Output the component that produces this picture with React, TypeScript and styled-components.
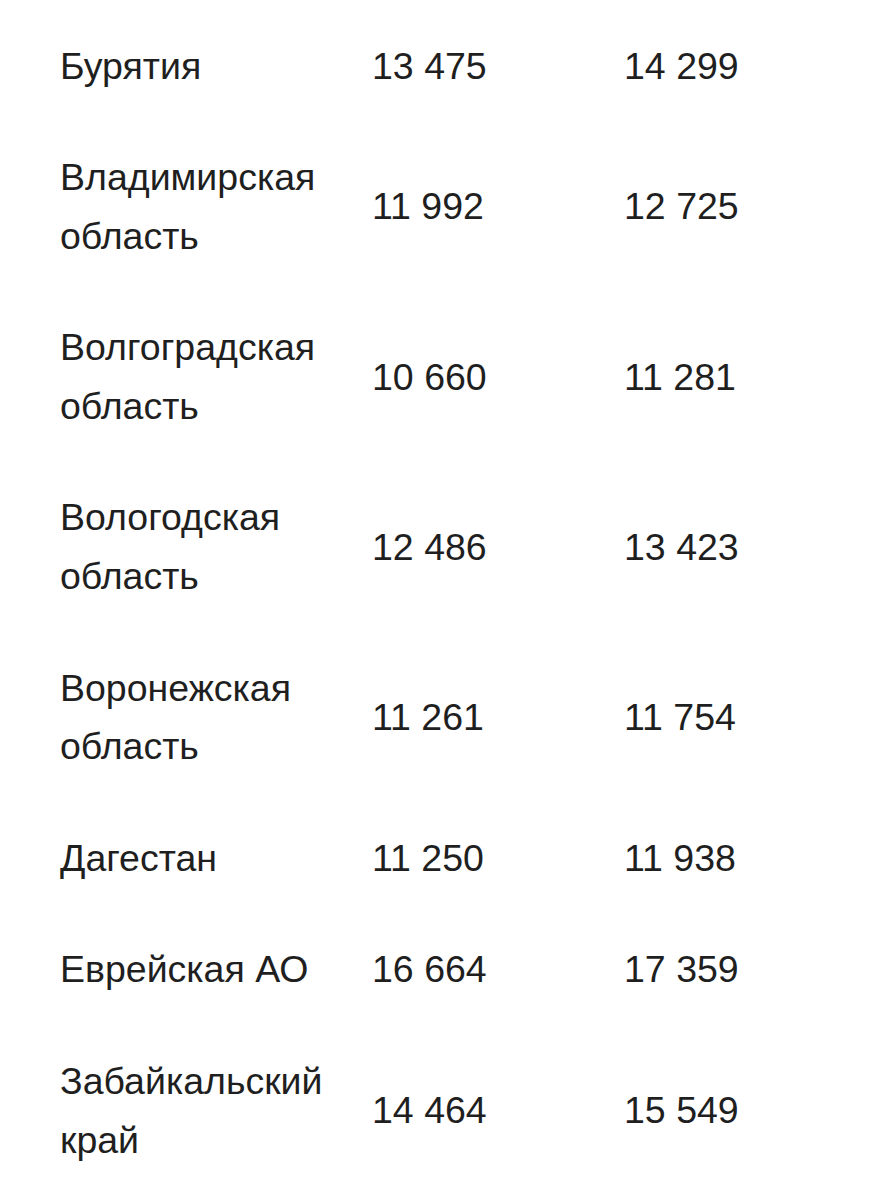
import React from "react";
import styled, { createGlobalStyle } from "styled-components";

const GlobalStyle = createGlobalStyle`
  html, body {
    margin: 0;
    padding: 0;
    background: #ffffff;
  }
  body {
    font-family: "Liberation Sans", Arial, Helvetica, sans-serif;
    color: #222222;
  }
`;

const Page = styled.div`
  padding: 10px 0 0 60px;
  width: 891px;
  box-sizing: border-box;
`;

const Table = styled.table`
  border-collapse: collapse;
  table-layout: fixed;
  width: 800px;
  font-size: 37.5px;
  line-height: 58.6px;
  color: #1f1f1f;
`;

const Row = styled.tr`
  background: none;
`;

const Cell = styled.td`
  padding: 26.5px 0;
  vertical-align: middle;
  white-space: normal;
`;

const NameCell = styled(Cell)`
  padding-right: 22px;
`;

interface IRegion {
  name: string;
  prev: string;
  next: string;
}

const regions: Array<IRegion> = [
  { name: "Бурятия", prev: "13 475", next: "14 299" },
  { name: "Владимирская область", prev: "11 992", next: "12 725" },
  { name: "Волгоградская область", prev: "10 660", next: "11 281" },
  { name: "Вологодская область", prev: "12 486", next: "13 423" },
  { name: "Воронежская область", prev: "11 261", next: "11 754" },
  { name: "Дагестан", prev: "11 250", next: "11 938" },
  { name: "Еврейская АО", prev: "16 664", next: "17 359" },
  { name: "Забайкальский край", prev: "14 464", next: "15 549" },
];

const App = () => {
  return (
    <>
      <GlobalStyle />
      <Page>
        <Table>
          <colgroup>
            <col style={{ width: 312 }} />
            <col style={{ width: 252 }} />
            <col />
          </colgroup>
          <tbody>
            {regions.map((region, index) => (
              <Row key={region.name + index}>
                <NameCell>{region.name}</NameCell>
                <Cell>{region.prev}</Cell>
                <Cell>{region.next}</Cell>
              </Row>
            ))}
          </tbody>
        </Table>
      </Page>
    </>
  );
};

export default App;
